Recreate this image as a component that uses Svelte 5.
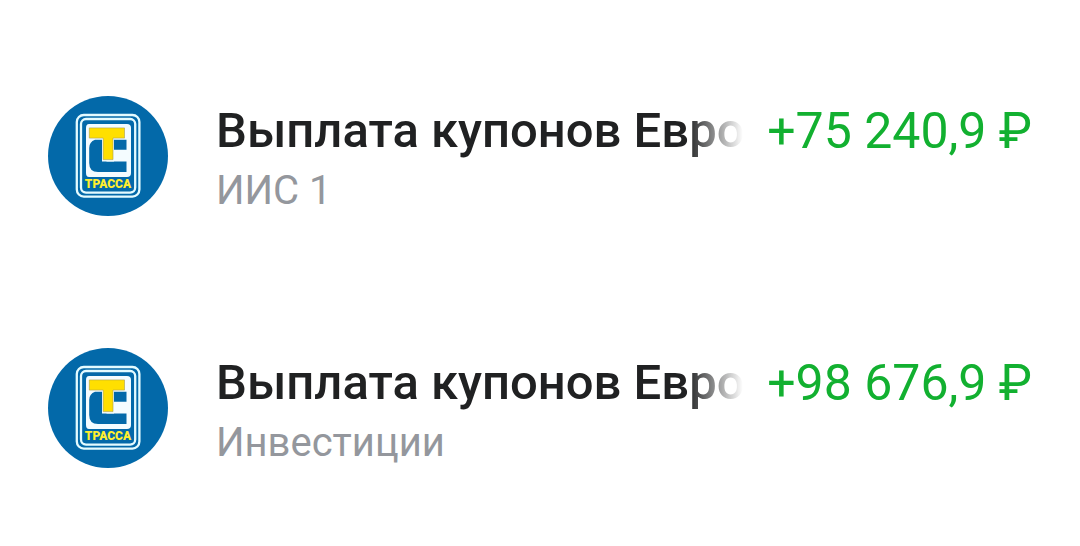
<script lang="ts">
  type Operation = {
    id: number;
    title: string;
    account: string;
    amount: string;
  };

  const operations: Operation[] = [
    { id: 1, title: "Выплата купонов Евро", account: "ИИС 1", amount: "+75 240,9 ₽" },
    { id: 2, title: "Выплата купонов Евро", account: "Инвестиции", amount: "+98 676,9 ₽" },
  ];
</script>

<ul class="operations">
  {#each operations as op (op.id)}
    <li class="operation">
      <svg class="logo" viewBox="0 0 120 120" role="img" aria-label="Трасса">
        <circle cx="60" cy="60" r="60" fill="#0369a9" />
        <g fill="none" stroke="#e4fbff">
          <rect x="28.8" y="19" width="62.6" height="81.6" rx="7" stroke-width="2.3" />
          <rect x="33" y="23" width="54.2" height="73.6" rx="5" stroke-width="2.3" />
        </g>
        <path d="M41 28h38q4 0 4 4v45q0 4-4 4H41q-3 0-3-4V32q0-4 3-4z" fill="#f4fcff" />
        <path
          d="M47 43.8h31.500v10H58.500v11.600H78.500v10.600H50q-8.800 0-8.800-9V52q0-6 5.800-8.200z"
          fill="#0369a9"
        />
        <path d="M54 43h12v22.500H54z" fill="#f4fcff" />
        <path
          d="M41.300 31.900h35.200v10.200H65v21.500H55.200V42.100H41.300z"
          fill="#ffdf00"
          stroke="#a99d4b"
          stroke-width=".6"
        />
        <text class="logo-name" x="60" y="92" text-anchor="middle">ТРАССА</text>
      </svg>
      <div class="text">
        <span class="title">{op.title}</span>
        <span class="account">{op.account}</span>
      </div>
      <span class="amount">{op.amount}</span>
    </li>
  {/each}
</ul>

<style>
  :global(body) {
    background: #fff;
  }
  .operations {
    display: grid;
    grid-template-columns: minmax(0, 1fr);
    gap: 132px;
    margin: 0;
    padding: 96px 48px 78px;
    list-style: none;
    font-family: Roboto, "Noto Sans", sans-serif;
  }
  .operation {
    display: flex;
    align-items: flex-start;
  }
  .logo {
    flex: none;
    width: 120px;
    height: 120px;
    margin-right: 48px;
  }
  .logo-name {
    font: 900 12px Roboto, sans-serif;
    fill: #ffee2e;
  }
  .text {
    flex: 1;
    min-width: 0;
    display: flex;
    flex-direction: column;
    margin-right: 24px;
  }
  .title {
    overflow: hidden;
    white-space: nowrap;
    font-size: 49px;
    font-weight: 500;
    line-height: 70px;
    color: #202122;
    mask-image: linear-gradient(to right, #000 calc(100% - 56px), transparent);
  }
  .account {
    font-size: 40px;
    line-height: 50px;
    color: #94979d;
  }
  .amount {
    flex: none;
    font-size: 50px;
    line-height: 70px;
    color: #12b030;
    white-space: nowrap;
  }
</style>
